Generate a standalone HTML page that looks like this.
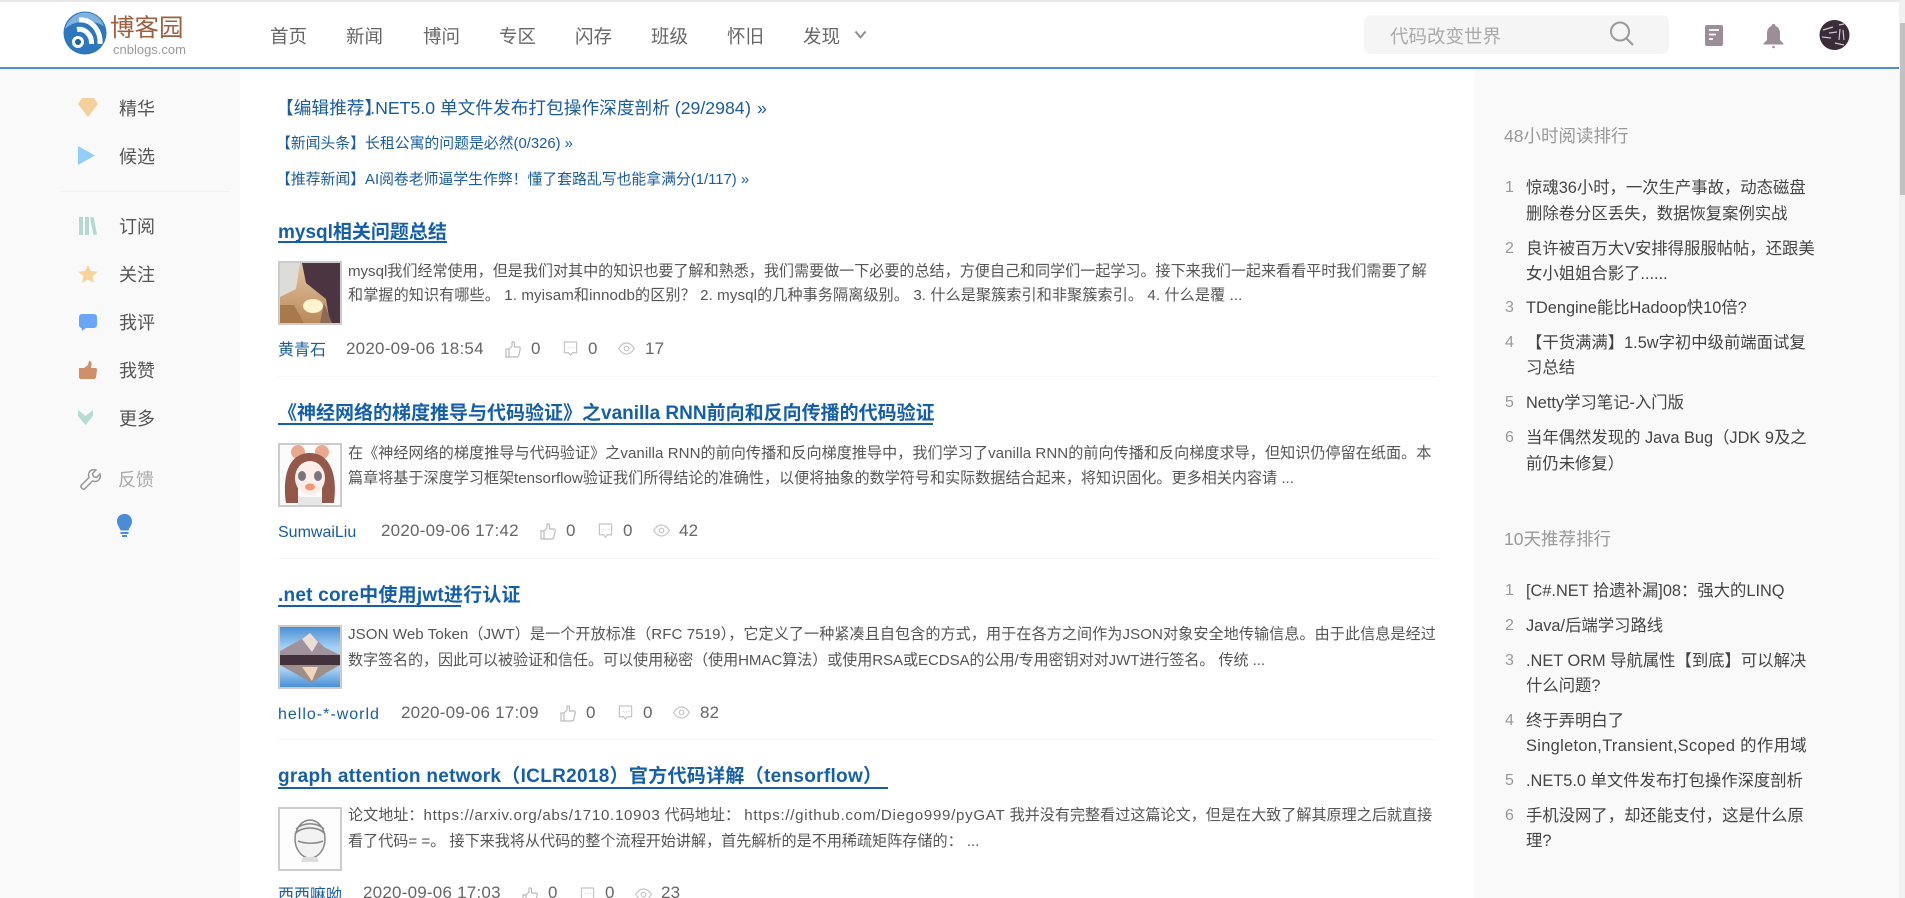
<!DOCTYPE html>
<html lang="zh-CN">
<head>
<meta charset="utf-8">
<title>博客园</title>
<style>
html,body{margin:0;padding:0;width:1905px;height:898px;overflow:hidden;background:#fff}
body{position:relative;font-family:"Liberation Sans","Noto Sans CJK SC",sans-serif;color:#555}
.t{position:absolute;white-space:nowrap;margin:0}
.a{position:absolute}
.nav{font-size:18.5px;line-height:30px;top:22px;color:#666}
.side{font-size:18px;line-height:26px;left:119px;color:#555}
.ico{position:absolute;overflow:visible}
.h1{font-size:17.7px;line-height:26px;left:276px;color:#1a5c9e}
.h2{font-size:14.85px;line-height:24px;left:276px;color:#1a5c9e}
.title{font-size:19px;font-weight:bold;line-height:26px;left:278px;color:#155fa8}
.ul{position:absolute;left:278px;height:1.5px;background:#155fa8}
.d{font-size:15.1px;line-height:24px;left:348px;color:#555}
.au{font-size:16px;line-height:24px;left:278px;color:#1a5c9e}
.m{font-size:17px;line-height:24px;color:#666;letter-spacing:.22px}
.hr{position:absolute;left:278px;width:1160px;height:1px;background:#f5f5f5}
.th{position:absolute;left:278px;width:60px;height:60px;border:2px solid #ccc;background:#fff;overflow:hidden}
.th svg{display:block}
.rh{font-size:17.5px;line-height:26px;left:1504px;color:#999;margin-top:1px}
.n{font-size:16px;line-height:26px;left:1505px;color:#999}
.r{font-size:16.35px;line-height:26px;left:1526px;color:#444}
.u{letter-spacing:.7px}
</style>
</head>
<body>
<svg width="0" height="0" style="position:absolute">
<symbol id="up" viewBox="0 0 16 17"><path d="M1 8h3v8H1zM4 8l3-3V1.5c0-1 2.5-1 2.5 1V6H14c1 0 1.5 1 1.2 2l-1.5 6.5c-.2 1-1 1.5-2 1.5H4" fill="none" stroke="#bbb" stroke-width="1.2"/></symbol>
<symbol id="cm" viewBox="0 0 16 17"><path d="M1.5 1h13v11.500h-4.500l-2 2.500-2-2.500H1.500z" fill="none" stroke="#c4c4c4" stroke-width="1.3"/><path d="M5 7h1M8 7h1M11 7h1" stroke="#c4c4c4"/></symbol>
<symbol id="ey" viewBox="0 0 17 13"><path d="M.7 6.500C3 2.500 6 1 8.500 1s5.500 1.500 7.800 5.500C14 10.500 11 12 8.500 12S3 10.500.7 6.500z" fill="none" stroke="#c4c4c4" stroke-width="1.200"/><circle cx="8.500" cy="6.500" r="2.300" fill="none" stroke="#c4c4c4" stroke-width="1.200"/></symbol>
</svg>

<!-- header -->
<div class="a" style="left:0;top:0;width:1905px;height:2px;background:#e8e8e8"></div>
<div class="a" style="left:0;top:67px;width:1899px;height:2px;background:#4a90d6"></div>

<svg class="ico" style="left:62px;top:10px" width="46" height="47" viewBox="0 0 46 47">
<circle cx="23" cy="23" r="21.500" fill="#2d77bd"/>
<path d="M3 19C6 8 15 2.500 23 2.500c8 0 16 4.500 19 14C34 10 13 9 3 19z" fill="#7fb2de"/>
<path d="M15 19.500C23 18 30 25 29.500 34" fill="none" stroke="#fff" stroke-width="5"/>
<path d="M17 10C29 9 39 20 38 34" fill="none" stroke="#fff" stroke-width="5"/>
<circle cx="16" cy="32" r="4.500" fill="#1f5f9f" stroke="#fff" stroke-width="3"/>
</svg>
<div class="t" style="left:110px;top:13px;font-size:24.500px;line-height:32px;color:#a0603f">博客园</div>
<div class="t" style="left:113px;top:42px;font-size:13px;line-height:16px;color:#999">cnblogs.com</div>

<div class="t nav" style="left:270px">首页</div>
<div class="t nav" style="left:346px">新闻</div>
<div class="t nav" style="left:423px">博问</div>
<div class="t nav" style="left:499px">专区</div>
<div class="t nav" style="left:575px">闪存</div>
<div class="t nav" style="left:651px">班级</div>
<div class="t nav" style="left:727px">怀旧</div>
<div class="t nav" style="left:803px">发现</div>
<svg class="ico" style="left:854px;top:30px" width="13" height="9" viewBox="0 0 13 9"><path d="M1.500 1.500l5 6 5-6" fill="none" stroke="#8d8d8d" stroke-width="2"/></svg>

<div class="a" style="left:1364px;top:15px;width:305px;height:39px;border-radius:7px;background:#f5f5f5"></div>
<div class="t" style="left:1390px;top:22px;font-size:18.500px;line-height:30px;color:#aaa">代码改变世界</div>
<svg class="ico" style="left:1609px;top:21px" width="26" height="25" viewBox="0 0 26 25"><circle cx="11" cy="10.500" r="9" fill="none" stroke="#9a9a9a" stroke-width="2"/><path d="M17 17l7 7" stroke="#9a9a9a" stroke-width="2.200"/></svg>
<svg class="ico" style="left:1705px;top:25px" width="18" height="21" viewBox="0 0 18 21"><rect width="18" height="21" rx="2" fill="#9b8e99"/><path d="M4 5h10M4 9.500h7M4 14h4" stroke="#fff" stroke-width="1.800"/></svg>
<svg class="ico" style="left:1763px;top:24px" width="21" height="24" viewBox="0 0 21 24"><path d="M10.500 0c1.500 0 2 1 2 2 3 1 4.500 4 4.500 7v7l3.500 3.500v1H.500v-1L4 16V9c0-3 1.500-6 4.500-7 0-1 .5-2 2-2z" fill="#9b8e99"/><circle cx="10.500" cy="23" r="1.300" fill="#9b8e99"/></svg>
<svg class="ico" style="left:1819px;top:20px" width="31" height="30" viewBox="0 0 31 30"><circle cx="15.500" cy="15" r="15" fill="#3a2c38"/><path d="M4 10l10-3M3 17l9 1M10 13l8-1M21 9l-1 11M24 10l1 10M16 23l9 2M20 5l5-1" stroke="#cfc8cd" stroke-width="1.200" fill="none"/></svg>

<!-- left sidebar -->
<div class="a" style="left:0;top:69px;width:240px;height:829px;background:#f9f9f9"></div>
<svg class="ico" style="left:78px;top:98px" width="20" height="19"><path d="M4 0h12l4 6-10 13L0 6z" fill="#f5cf9c"/></svg>
<svg class="ico" style="left:78px;top:146px" width="17" height="19"><path d="M0 0l17 9.500L0 19z" fill="#93ccff"/></svg>
<svg class="ico" style="left:79px;top:217px" width="18" height="18"><path d="M0 0h4v18H0zM6 0h4v18H6zM11 .5l3.500-.5L18 17.500l-3.500.5z" fill="#b5d8d3"/></svg>
<svg class="ico" style="left:78px;top:265px" width="20" height="18" viewBox="0 0 20 18"><path d="M10 0l2.800 6 6.700.7-5 4.500 1.500 6.500L10 14.500 4 17.700l1.500-6.500-5-4.500L7.200 6z" fill="#fad398"/></svg>
<svg class="ico" style="left:79px;top:314px" width="18" height="17"><path d="M3 0h12a3 3 0 0 1 3 3v8a3 3 0 0 1-3 3H7l-4 3-.5-3A3 3 0 0 1 0 11V3a3 3 0 0 1 3-3z" fill="#69a6f5"/></svg>
<svg class="ico" style="left:79px;top:361px" width="18" height="18"><path d="M0 7h5v11H2a2 2 0 0 1-2-2zM5 7l4-3 1-4c2 0 3 1.500 2.500 3.500L12 7h4c1.500 0 2 1 2 2l-1 7c0 1-1 2-2 2H5z" fill="#cf8f68"/></svg>
<svg class="ico" style="left:78px;top:410px" width="15" height="15"><path d="M0 0l7.500 6L15 0v6l-7.500 9L0 6z" fill="#b7dbd5"/></svg>
<svg class="ico" style="left:80px;top:469px" width="21" height="21" viewBox="0 0 21 21"><path d="M1 16.500l8-8C8 5 9 2 12 1c1.500-.5 3-.5 4 0l-3.500 3.500 1 3 3 1L20 5c.5 1.500 .5 3-.5 5-1.500 2.500-4.500 3-7 2L4.500 20c-1.500 1-4.500-2-3.500-3.500z" fill="none" stroke="#999" stroke-width="1.500"/></svg>
<svg class="ico" style="left:117px;top:514px" width="15" height="23" viewBox="0 0 15 23"><path d="M7.500 0C12 0 15 3 15 7.500c0 4-3 6-3.500 9h-8C3 13.500 0 11.500 0 7.500 0 3 3 0 7.500 0z" fill="#4a8cd6"/><rect x="3.500" y="18" width="8" height="2" fill="#4a8cd6"/><rect x="5" y="21" width="5" height="2" fill="#4a8cd6"/></svg>

<div class="t side" style="top:96px">精华</div>
<div class="t side" style="top:144px">候选</div>
<div class="a" style="left:61px;top:191px;width:169px;height:1px;background:#f1f1f1"></div>
<div class="t side" style="top:214px">订阅</div>
<div class="t side" style="top:262px">关注</div>
<div class="t side" style="top:310px">我评</div>
<div class="t side" style="top:358px">我赞</div>
<div class="t side" style="top:406px">更多</div>
<div class="t side" style="top:467px;left:118px;color:#aaa">反馈</div>

<!-- main -->
<div class="t h1" style="top:95px">【编辑推荐<span style="margin-right:-12px">】</span>.NET5.0 单文件发布打包操作深度剖析 (29/2984<span style="margin-left:.5px">)</span> <span style="margin-left:1px">»</span></div>
<div class="t h2" style="top:132px">【新闻头条】长租公寓的问题是必然(0/326) »</div>
<div class="t h2" style="top:168px">【推荐新闻】AI阅卷老师逼学生作弊！懂了套路乱写也能拿满分(1/117) »</div>

<!-- item 1 -->
<div class="t title" style="top:220px">mysql相关问题总结</div>
<div class="ul" style="top:241px;width:169px"></div>
<div class="th" style="top:261px"><svg width="60" height="60" viewBox="0 0 60 60">
<defs><linearGradient id="g1" x1="0" y1="0" x2="0" y2="1"><stop offset="0" stop-color="#e2c4a2"/><stop offset="1" stop-color="#b98a5c"/></linearGradient></defs>
<rect width="60" height="60" fill="url(#g1)"/>
<path d="M0 0h20l-4 26-16 8z" fill="#dedcd8"/>
<path d="M22 0h38v60H50L46 36 26 20z" fill="#4b3540"/>
<ellipse cx="33" cy="43" rx="10" ry="7" fill="#fff3d0"/>
<path d="M0 42l14 0 10 18H0z" fill="#a9794c"/>
<path d="M44 40l8 20H40z" fill="#8e6a58"/>
</svg></div>
<div class="t d" style="top:260px;letter-spacing:-.03px">mysql我们经常使用，但是我们对其中的知识也要了解和熟悉，我们需要做一下必要的总结，方便自己和同学们一起学习。接下来我们一起来看看平时我们需要了解</div>
<div class="t d" style="top:284px;letter-spacing:.1px">和掌握的知识有哪些。 1. myisam和innodb的区别？ 2. mysql的几种事务隔离级别。 3. 什么是聚簇索引和非聚簇索引。 4. 什么是覆 ...</div>
<div class="t au" style="top:339px">黄青石</div>
<div class="t m" style="left:346px;top:337px">2020-09-06 18:54</div>
<svg class="ico" style="left:505px;top:341px" width="16" height="17"><use href="#up"/></svg>
<div class="t m" style="left:531px;top:337px">0</div>
<svg class="ico" style="left:563px;top:341px" width="15" height="16"><use href="#cm"/></svg>
<div class="t m" style="left:588px;top:337px">0</div>
<svg class="ico" style="left:618px;top:342px" width="17" height="13"><use href="#ey"/></svg>
<div class="t m" style="left:645px;top:337px">17</div>
<div class="hr" style="top:376px"></div>

<!-- item 2 -->
<div class="t title" style="top:401px">《神经网络的梯度推导与代码验证》之vanilla RNN前向和反向传播的代码验证</div>
<div class="ul" style="top:423px;width:655px"></div>
<div class="th" style="top:443px"><svg width="60" height="60" viewBox="0 0 60 60">
<rect width="60" height="60" fill="#fbfbfb"/>
<circle cx="18" cy="7" r="7" fill="#e9a98c"/><circle cx="42" cy="7" r="7" fill="#e9a98c"/>
<path d="M6 58C2 28 10 8 30 8c20 0 28 22 24 50H42V32L30 20 18 32v26z" fill="#93584a"/>
<ellipse cx="30" cy="33" rx="15" ry="17" fill="#fbeee9"/>
<ellipse cx="22" cy="31" rx="4" ry="5" fill="#7a7480"/><ellipse cx="38" cy="31" rx="4" ry="5" fill="#7a7480"/>
<ellipse cx="30" cy="42" rx="5" ry="3.500" fill="#ee9a78"/>
<path d="M18 52h24v8H18z" fill="#e6e6e6"/>
</svg></div>
<div class="t d" style="top:442px;letter-spacing:.04px">在《神经网络的梯度推导与代码验证》之vanilla RNN的前向传播和反向梯度推导中，我们学习了vanilla RNN的前向传播和反向梯度求导，但知识仍停留在纸面。本</div>
<div class="t d" style="top:467px">篇章将基于深度学习框架tensorflow验证我们所得结论的准确性，以便将抽象的数学符号和实际数据结合起来，将知识固化。更多相关内容请 ...</div>
<div class="t au" style="top:521px">SumwaiLiu</div>
<div class="t m" style="left:381px;top:519px">2020-09-06 17:42</div>
<svg class="ico" style="left:540px;top:523px" width="16" height="17"><use href="#up"/></svg>
<div class="t m" style="left:566px;top:519px">0</div>
<svg class="ico" style="left:598px;top:523px" width="15" height="16"><use href="#cm"/></svg>
<div class="t m" style="left:623px;top:519px">0</div>
<svg class="ico" style="left:653px;top:524px" width="17" height="13"><use href="#ey"/></svg>
<div class="t m" style="left:679px;top:519px">42</div>
<div class="hr" style="top:558px"></div>

<!-- item 3 -->
<div class="t title" style="top:583px;letter-spacing:.22px">.net core中使用jwt进行认证</div>
<div class="ul" style="top:605px;width:183px"></div>
<div class="th" style="top:625px"><svg width="60" height="60" viewBox="0 0 60 60">
<defs><linearGradient id="g3" x1="0" y1="0" x2="0" y2="1"><stop offset="0" stop-color="#4a8fd4"/><stop offset=".35" stop-color="#a8d2f5"/><stop offset=".7" stop-color="#a8d2f5"/><stop offset="1" stop-color="#4a8fd4"/></linearGradient></defs>
<rect width="60" height="60" fill="url(#g3)"/>
<path d="M0 24L18 14 30 6l14 14 16 8v6H0z" fill="#a0929c"/>
<path d="M22 12l8-6 8 9-6 10z" fill="#eadfd6"/>
<rect y="28" width="60" height="10" fill="#43323b"/>
<path d="M0 38h60L46 46 31 56 18 48z" fill="#9d8d8b"/>
<path d="M22 40h16l-6 14z" fill="#f0d5b8"/>
</svg></div>
<div class="t d" style="top:623px;letter-spacing:.07px">JSON Web Token（JWT）是一个开放标准（RFC 7519），它定义了一种紧凑且自包含的方式，用于在各方之间作为JSON对象安全地传输信息。由于此信息是经过</div>
<div class="t d" style="top:649px;letter-spacing:-.09px">数字签名的，因此可以被验证和信任。可以使用秘密（使用HMAC算法）或使用RSA或ECDSA的公用/专用密钥对对JWT进行签名。 传统 ...</div>
<div class="t au" style="top:703px;letter-spacing:1px">hello-*-world</div>
<div class="t m" style="left:401px;top:701px">2020-09-06 17:09</div>
<svg class="ico" style="left:560px;top:705px" width="16" height="17"><use href="#up"/></svg>
<div class="t m" style="left:586px;top:701px">0</div>
<svg class="ico" style="left:618px;top:705px" width="15" height="16"><use href="#cm"/></svg>
<div class="t m" style="left:643px;top:701px">0</div>
<svg class="ico" style="left:673px;top:706px" width="17" height="13"><use href="#ey"/></svg>
<div class="t m" style="left:700px;top:701px">82</div>
<div class="hr" style="top:739px"></div>

<!-- item 4 -->
<div class="t title" style="top:764px;letter-spacing:.3px">graph attention network（ICLR2018）官方代码详解（tensorflow）</div>
<div class="ul" style="top:787px;width:610px"></div>
<div class="th" style="top:807px"><svg width="60" height="60" viewBox="0 0 60 60">
<rect width="60" height="60" fill="#fdfdfd"/>
<ellipse cx="30" cy="30" rx="15" ry="19" fill="#f2f2f2" stroke="#888" stroke-width="1.500"/>
<path d="M15 25c6-8 24-8 30 0M16 20c8-7 20-7 28 0M18 32c8 3 18 3 25 0" fill="none" stroke="#888" stroke-width="1.500"/>
<path d="M23 48l-2 5h18l-2-5" fill="#ddd"/>
</svg></div>
<div class="t d" style="top:804px">论文地址：<span class="u">https://arxiv.org/abs/1710.10903</span> 代码地址： <span class="u">https://github.com/Diego999/pyGAT</span> 我并没有完整看过这篇论文，但是在大致了解其原理之后就直接</div>
<div class="t d" style="top:830px">看了代码= =。 接下来我将从代码的整个流程开始讲解，首先解析的是不用稀疏矩阵存储的： ...</div>
<div class="t au" style="top:884px">西西嘛呦</div>
<div class="t m" style="left:363px;top:881px">2020-09-06 17:03</div>
<svg class="ico" style="left:522px;top:887px" width="16" height="17"><use href="#up"/></svg>
<div class="t m" style="left:548px;top:881px">0</div>
<svg class="ico" style="left:580px;top:887px" width="15" height="16"><use href="#cm"/></svg>
<div class="t m" style="left:605px;top:881px">0</div>
<svg class="ico" style="left:635px;top:888px" width="17" height="13"><use href="#ey"/></svg>
<div class="t m" style="left:661px;top:881px">23</div>

<!-- right sidebar -->
<div class="a" style="left:1474px;top:69px;width:425px;height:829px;background:#f9f9f9"></div>
<div class="t rh" style="top:122px">48小时阅读排行</div>
<div class="t n" style="top:175px">1</div>
<div class="t r" style="top:175px">惊魂36小时，一次生产事故，动态磁盘</div>
<div class="t r" style="top:201px">删除卷分区丢失，数据恢复案例实战</div>
<div class="t n" style="top:236px">2</div>
<div class="t r" style="top:236px">良许被百万大V安排得服服帖帖，还跟美</div>
<div class="t r" style="top:261px">女小姐姐合影了......</div>
<div class="t n" style="top:295px">3</div>
<div class="t r" style="top:295px">TDengine能比Hadoop快10倍?</div>
<div class="t n" style="top:330px">4</div>
<div class="t r" style="top:330px">【干货满满】1.5w字初中级前端面试复</div>
<div class="t r" style="top:355px">习总结</div>
<div class="t n" style="top:390px">5</div>
<div class="t r" style="top:390px">Netty学习笔记-入门版</div>
<div class="t n" style="top:425px">6</div>
<div class="t r" style="top:425px">当年偶然发现的 Java Bug（JDK 9及之</div>
<div class="t r" style="top:451px">前仍未修复）</div>

<div class="t rh" style="top:525px">10天推荐排行</div>
<div class="t n" style="top:578px">1</div>
<div class="t r" style="top:578px">[C#.NET 拾遗补漏]08：强大的LINQ</div>
<div class="t n" style="top:613px">2</div>
<div class="t r" style="top:613px">Java/后端学习路线</div>
<div class="t n" style="top:648px">3</div>
<div class="t r" style="top:648px">.NET ORM 导航属性【到底】可以解决</div>
<div class="t r" style="top:673px">什么问题?</div>
<div class="t n" style="top:708px">4</div>
<div class="t r" style="top:708px">终于弄明白了</div>
<div class="t r" style="top:733px;letter-spacing:.35px">Singleton,Transient,Scoped 的作用域</div>
<div class="t n" style="top:768px">5</div>
<div class="t r" style="top:768px">.NET5.0 单文件发布打包操作深度剖析</div>
<div class="t n" style="top:803px">6</div>
<div class="t r" style="top:803px">手机没网了，却还能支付，这是什么原</div>
<div class="t r" style="top:828px">理?</div>

<!-- scrollbar -->
<div class="a" style="left:1899px;top:0;width:6px;height:898px;background:#f1f1f1"></div>
<div class="a" style="left:1900px;top:23px;width:5px;height:172px;background:#c1c1c1"></div>
</body>
</html>
